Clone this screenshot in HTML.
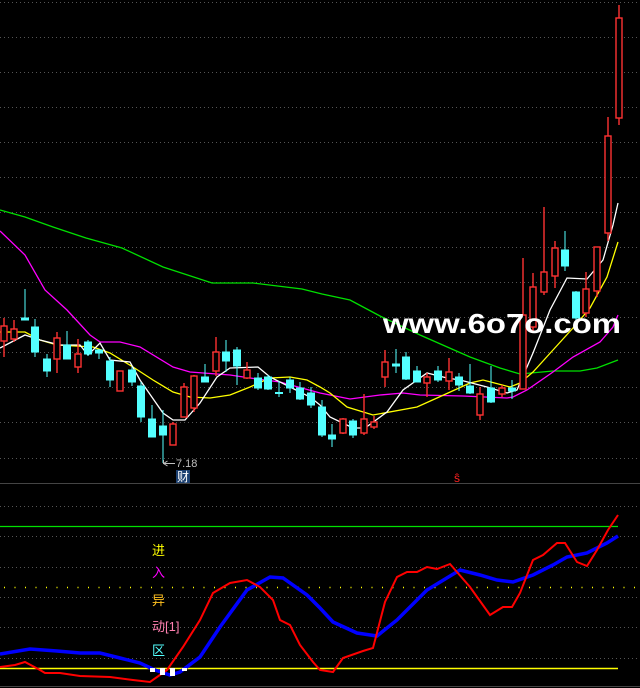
<!DOCTYPE html>
<html><head><meta charset="utf-8"><style>
html,body{margin:0;padding:0;background:#000;width:640px;height:688px;overflow:hidden}
svg{display:block}
</style></head><body>
<svg width="640" height="688" viewBox="0 0 640 688" xmlns="http://www.w3.org/2000/svg">
<rect width="640" height="688" fill="#000"/>
<g stroke="#555" stroke-width="1" stroke-dasharray="1,3">
<path d="M0 2.5H640M0 37.5H640M0 72.5H640M0 107.5H640M0 142.5H640M0 177.5H640M0 212.5H640M0 247.5H640M0 282.5H640M0 317.5H640M0 352.5H640M0 387.5H640M0 422.5H640M0 458.5H640"/>
<path d="M0 506.5H640M0 536.5H640M0 567.5H640M0 597.5H640M0 627.5H640M0 658.5H640"/>
</g>
<path d="M0 483.5H640M0 686.5H640" stroke="#444" stroke-width="1"/>
<!-- MA lines -->
<polyline fill="none" stroke="#00e000" stroke-width="1.3" points="0,210 25,217 53,227 86,238 122,248 163,267 212,283 253,283 302,289 322,294 350,300 380,316 420,335 470,357 500,368 520,374 553,371 580,371 597,368 618,360"/>
<polyline fill="none" stroke="#ff00ff" stroke-width="1.3" points="0,231 25,255 45,290 67,310 90,335 100,342 120,342 140,347 173,367 190,372 230,375 250,378 280,382 320,393 350,399 380,395 403,393 420,395 463,396 507,398 513,397 527,390 553,372 573,357 600,342 613,327 618,315"/>
<polyline fill="none" stroke="#ffff00" stroke-width="1.3" points="0,332 25,332 40,340 57,345 93,347 110,353 133,367 153,380 173,392 190,397 210,398 230,395 250,387 270,378 290,377 307,380 320,387 330,393 347,407 373,415 417,407 437,398 470,383 483,380 510,387 520,383 533,372 553,350 573,328 590,308 607,277 618,242"/>
<polyline fill="none" stroke="#ffffff" stroke-width="1.3" points="0,348 25,335 40,340 60,345 80,345 88,355 100,343 110,360 130,362 140,380 163,413 173,420 185,420 200,403 217,377 230,368 258,367 270,377 290,387 310,397 320,405 330,417 353,428 365,428 387,412 403,390 427,373 447,378 460,380 487,387 507,393 517,390 533,353 550,310 567,278 587,279 603,260 613,225 618,203"/>
<!-- candles -->
<g stroke="#54ffff" stroke-width="1" fill="#54ffff">
<line x1="25" y1="289" x2="25" y2="319"/><rect x="21.5" y="318" width="7" height="2"/>
<line x1="35" y1="319" x2="35" y2="357"/><rect x="31.5" y="327" width="7" height="25"/>
<line x1="47" y1="354" x2="47" y2="377"/><rect x="43.5" y="359" width="7" height="12"/>
<line x1="67" y1="331" x2="67" y2="359"/><rect x="63.5" y="345" width="7" height="14"/>
<line x1="88" y1="340" x2="88" y2="356"/><rect x="84.5" y="342" width="7" height="12"/>
<line x1="99" y1="349" x2="99" y2="359"/><rect x="95.5" y="350" width="7" height="3"/>
<line x1="110" y1="357" x2="110" y2="387"/><rect x="106.5" y="361" width="7" height="19"/>
<line x1="132" y1="367" x2="132" y2="386"/><rect x="128.5" y="370" width="7" height="12"/>
<line x1="141" y1="382" x2="141" y2="422"/><rect x="137.5" y="386" width="7" height="31"/>
<line x1="152" y1="405" x2="152" y2="437"/><rect x="148.5" y="419" width="7" height="18"/>
<line x1="163" y1="410" x2="163" y2="463"/><rect x="159.5" y="426" width="7" height="9"/>
<line x1="205" y1="364" x2="205" y2="382"/><rect x="201.5" y="377" width="7" height="5"/>
<line x1="226" y1="340" x2="226" y2="372"/><rect x="222.5" y="352" width="7" height="9"/>
<line x1="237" y1="347" x2="237" y2="385"/><rect x="233.5" y="350" width="7" height="16"/>
<line x1="258" y1="373" x2="258" y2="390"/><rect x="254.5" y="378" width="7" height="10"/>
<line x1="268" y1="375" x2="268" y2="390"/><rect x="264.5" y="377" width="7" height="12"/>
<line x1="279" y1="381" x2="279" y2="397"/><rect x="275.5" y="392.5" width="7" height="1"/>
<line x1="290" y1="377" x2="290" y2="393"/><rect x="286.5" y="380" width="7" height="8"/>
<line x1="300" y1="382" x2="300" y2="400"/><rect x="296.5" y="388" width="7" height="11"/>
<line x1="311" y1="387" x2="311" y2="408"/><rect x="307.5" y="393" width="7" height="12"/>
<line x1="322" y1="400" x2="322" y2="437"/><rect x="318.5" y="407" width="7" height="28"/>
<line x1="332" y1="424" x2="332" y2="447"/><rect x="328.5" y="435" width="7" height="4"/>
<line x1="353" y1="419" x2="353" y2="438"/><rect x="349.5" y="421" width="7" height="14"/>
<line x1="396" y1="349" x2="396" y2="373"/><rect x="392.5" y="364" width="7" height="2"/>
<line x1="406" y1="352" x2="406" y2="380"/><rect x="402.5" y="357" width="7" height="22"/>
<line x1="417" y1="366" x2="417" y2="382"/><rect x="413.5" y="371" width="7" height="11"/>
<line x1="438" y1="366" x2="438" y2="382"/><rect x="434.5" y="371" width="7" height="9"/>
<line x1="459" y1="373" x2="459" y2="391"/><rect x="455.5" y="377" width="7" height="8"/>
<line x1="470" y1="364" x2="470" y2="394"/><rect x="466.5" y="386" width="7" height="7"/>
<line x1="491" y1="366" x2="491" y2="403"/><rect x="487.5" y="388" width="7" height="14"/>
<line x1="512" y1="380" x2="512" y2="399"/><rect x="508.5" y="388" width="7" height="3"/>
<line x1="565" y1="231" x2="565" y2="271"/><rect x="561.5" y="250" width="7" height="16"/>
<line x1="576" y1="291" x2="576" y2="320"/><rect x="572.5" y="292" width="7" height="26"/>
</g>
<g stroke="#ff3232" stroke-width="1.4" fill="#000">
<line x1="4" y1="318" x2="4" y2="357"/><rect x="1" y="326" width="6" height="15"/>
<line x1="14" y1="320" x2="14" y2="342"/><rect x="11" y="329" width="6" height="10"/>
<line x1="57" y1="332" x2="57" y2="373"/><rect x="54" y="338" width="6" height="21"/>
<line x1="78" y1="339" x2="78" y2="373"/><rect x="75" y="354" width="6" height="13"/>
<rect x="117" y="371" width="6" height="20"/>
<line x1="173" y1="422" x2="173" y2="445"/><rect x="170" y="424" width="6" height="21"/>
<line x1="184" y1="383" x2="184" y2="417"/><rect x="181" y="387" width="6" height="30"/>
<line x1="194" y1="375" x2="194" y2="412"/><rect x="191" y="376" width="6" height="32"/>
<line x1="216" y1="337" x2="216" y2="376"/><rect x="213" y="352" width="6" height="19"/>
<line x1="247" y1="362" x2="247" y2="379"/><rect x="244" y="370" width="6" height="8"/>
<line x1="343" y1="418" x2="343" y2="434"/><rect x="340" y="419" width="6" height="14"/>
<line x1="364" y1="394" x2="364" y2="435"/><rect x="361" y="419" width="6" height="14"/>
<line x1="374" y1="416" x2="374" y2="429"/><rect x="371" y="422" width="6" height="5"/>
<line x1="385" y1="350" x2="385" y2="387"/><rect x="382" y="362" width="6" height="15"/>
<line x1="427" y1="373" x2="427" y2="397"/><rect x="424" y="377" width="6" height="6"/>
<line x1="449" y1="358" x2="449" y2="390"/><rect x="446" y="372" width="6" height="9"/>
<line x1="480" y1="387" x2="480" y2="420"/><rect x="477" y="394" width="6" height="21"/>
<line x1="502" y1="385" x2="502" y2="397"/><rect x="499" y="388" width="6" height="6"/>
<line x1="523" y1="258" x2="523" y2="389"/><rect x="520" y="315" width="6" height="74"/>
<line x1="533" y1="273" x2="533" y2="333"/><rect x="530" y="287" width="6" height="40"/>
<line x1="544" y1="207" x2="544" y2="295"/><rect x="541" y="272" width="6" height="20"/>
<line x1="555" y1="241" x2="555" y2="288"/><rect x="552" y="248" width="6" height="28"/>
<line x1="586" y1="272" x2="586" y2="317"/><rect x="583" y="289" width="6" height="24"/>
<line x1="597" y1="272" x2="597" y2="297"/><rect x="594" y="247" width="6" height="44"/>
<line x1="608" y1="117" x2="608" y2="241"/><rect x="605" y="136" width="6" height="97"/>
<line x1="619" y1="5" x2="619" y2="125"/><rect x="616" y="18" width="6" height="100"/>
</g>
<!-- label -->
<path d="M163.5 460V463.5H175M163.5 463.5l4-2.5M163.5 463.5l4 2.5" stroke="#c0c0c0" stroke-width="1" fill="none"/>
<text x="176" y="467" font-family="Liberation Sans, sans-serif" font-size="11" fill="#c0c0c0">7.18</text>
<rect x="176" y="470" width="14" height="13" fill="#1c4070"/>
<text x="177" y="481" font-family="Liberation Sans, Noto Sans CJK SC, sans-serif" font-size="12" fill="#fff">财</text>
<text x="454" y="482" font-family="Liberation Sans, sans-serif" font-size="12" fill="#ff2020">ŝ</text>
<text x="383" y="333" font-family="Liberation Sans, sans-serif" font-size="28" font-weight="bold" fill="#fff" textLength="238" lengthAdjust="spacingAndGlyphs">www.6o7o.com</text>
<!-- lower panel -->
<path d="M0 526.5H618" stroke="#00e000" stroke-width="1.3"/>
<path d="M4 587.5H640" stroke="#ffff00" stroke-width="1.5" stroke-dasharray="1,9.5"/>
<path d="M0 668.5H618" stroke="#ffff00" stroke-width="1.5"/>
<polyline fill="none" stroke="#0000ff" stroke-width="3.5" points="0,654 30,649 57,651 80,653 100,653 120,658 140,663 155,670 170,675 180,672 200,657 220,627 247,590 270,577 283,578 307,595 320,608 333,622 357,633 377,636 397,620 427,590 460,570 480,575 497,580 513,582 533,575 553,565 567,557 587,553 607,543 618,536"/>
<polyline fill="none" stroke="#ff0000" stroke-width="2" points="0,667 15,665 25,662 40,670 45,673 60,673 80,676 110,677 133,680 150,682 167,670 183,647 200,620 213,593 230,583 247,580 260,587 273,600 280,620 290,625 300,645 313,662 320,670 333,672 343,658 363,651 373,648 385,602 397,577 407,572 417,572 427,567 437,569 450,564 470,587 490,615 503,607 512,607 520,593 533,560 543,555 557,543 565,543 577,562 587,566 597,550 608,530 618,515"/>
<g fill="#fff"><rect x="150" y="668" width="5" height="4"/><rect x="160" y="668" width="5" height="7"/><rect x="170" y="668" width="5" height="8"/><rect x="182" y="668" width="5" height="3"/></g>
<g font-family="Liberation Sans, Noto Sans CJK SC, sans-serif" font-size="13">
<text x="152" y="555" fill="#ffff00">进</text>
<text x="152" y="577" fill="#ff00ff">入</text>
<text x="152" y="605" fill="#ffc020">异</text>
<text x="152" y="631" fill="#ff80b0">动[1]</text>
<text x="152" y="655" fill="#54ffff">区</text>
</g>
</svg>
</body></html>
